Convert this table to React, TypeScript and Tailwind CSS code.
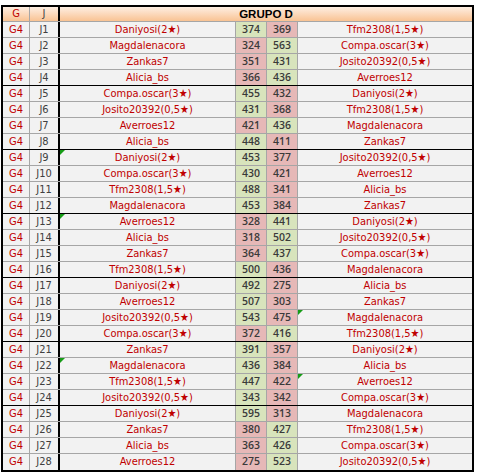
import React from "react";

type Row = [number, string, number, number, string];

const rows: Row[] = [
  [1, "Daniyosi(2★)", 374, 369, "Tfm2308(1,5★)"],
  [2, "Magdalenacora", 324, 563, "Compa.oscar(3★)"],
  [3, "Zankas7", 351, 431, "Josito20392(0,5★)"],
  [4, "Alicia_bs", 366, 436, "Averroes12"],
  [5, "Compa.oscar(3★)", 455, 432, "Daniyosi(2★)"],
  [6, "Josito20392(0,5★)", 431, 368, "Tfm2308(1,5★)"],
  [7, "Averroes12", 421, 436, "Magdalenacora"],
  [8, "Alicia_bs", 448, 411, "Zankas7"],
  [9, "Daniyosi(2★)", 453, 377, "Josito20392(0,5★)"],
  [10, "Compa.oscar(3★)", 430, 421, "Averroes12"],
  [11, "Tfm2308(1,5★)", 488, 341, "Alicia_bs"],
  [12, "Magdalenacora", 453, 384, "Zankas7"],
  [13, "Averroes12", 328, 441, "Daniyosi(2★)"],
  [14, "Alicia_bs", 318, 502, "Josito20392(0,5★)"],
  [15, "Zankas7", 364, 437, "Compa.oscar(3★)"],
  [16, "Tfm2308(1,5★)", 500, 436, "Magdalenacora"],
  [17, "Daniyosi(2★)", 492, 275, "Alicia_bs"],
  [18, "Averroes12", 507, 303, "Zankas7"],
  [19, "Josito20392(0,5★)", 543, 475, "Magdalenacora"],
  [20, "Compa.oscar(3★)", 372, 416, "Tfm2308(1,5★)"],
  [21, "Zankas7", 391, 357, "Daniyosi(2★)"],
  [22, "Magdalenacora", 436, 384, "Alicia_bs"],
  [23, "Tfm2308(1,5★)", 447, 422, "Averroes12"],
  [24, "Josito20392(0,5★)", 343, 342, "Compa.oscar(3★)"],
  [25, "Daniyosi(2★)", 595, 313, "Magdalenacora"],
  [26, "Zankas7", 380, 427, "Tfm2308(1,5★)"],
  [27, "Alicia_bs", 363, 426, "Compa.oscar(3★)"],
  [28, "Averroes12", 275, 523, "Josito20392(0,5★)"],
];

const triLeft = new Set([9, 13, 22]);
const triRight = new Set([19, 23]);

function Tri() {
  return (
    <div className="absolute left-0 top-0 w-[5px] h-[5px] bg-[#169c16] [clip-path:polygon(0_0,100%_0,0_100%)]" />
  );
}

function Score({ value, win }: { value: number; win: boolean }) {
  return (
    <div
      className={`w-[31px] border-r border-[#a6a6a6] text-center text-[#3a3a3a] font-semibold text-[10.5px] font-['Open_Sans','Liberation_Sans',sans-serif] ${
        win ? "bg-[#d8e4bc]" : "bg-[#e6b8b7]"
      }`}
    >
      {value}
    </div>
  );
}

export default function App() {
  return (
    <div className="bg-white w-[481px] h-[474px] pt-[5px] pl-[1px]">
      <div className="w-[473px] border-2 border-black text-[11px] font-['DejaVu_Sans_Condensed','DejaVu_Sans',sans-serif]">
        <div className="flex h-[15px] border-b border-[#a6a6a6] bg-gradient-to-b from-[#fdeee2] to-[#f9c393] leading-[14px]">
          <div className="w-[27px] border-r border-[#a6a6a6] text-center text-[#c00000]">G</div>
          <div className="w-[30px] border-r-2 border-black text-center text-[#404040]">J</div>
          <div className="flex-1 text-center font-bold text-black text-[11.5px] font-['Liberation_Sans',sans-serif]">
            GRUPO D
          </div>
        </div>
        {rows.map(([j, a, s1, s2, b], i) => {
          const last = i === rows.length - 1;
          const group = j % 4 === 0;
          const border = last ? "" : group ? "border-b border-black" : "border-b border-[#a6a6a6]";
          const aWin = s1 > s2;
          return (
            <div key={j} className={`flex h-[16px] bg-[#f2f2f2] leading-[15px] ${border}`}>
              <div className="w-[27px] border-r border-[#a6a6a6] text-center text-[#c00000]">G4</div>
              <div className="w-[30px] border-r-2 border-black text-center text-[#404040]">J{j}</div>
              <div className="relative w-[176px] border-r border-[#a6a6a6] text-center text-[#c00000] whitespace-nowrap">
                {triLeft.has(j) && <Tri />}
                {a}
              </div>
              <Score value={s1} win={aWin} />
              <Score value={s2} win={!aWin} />
              <div className="relative flex-1 text-center text-[#c00000] whitespace-nowrap">
                {triRight.has(j) && <Tri />}
                {b}
              </div>
            </div>
          );
        })}
      </div>
    </div>
  );
}
